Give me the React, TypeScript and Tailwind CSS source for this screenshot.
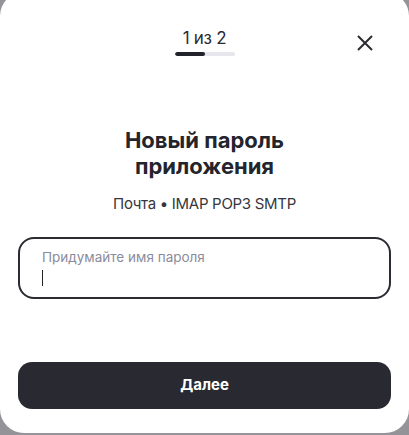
export default function App() {
  return (
    <div className="w-[409px] h-[435px] bg-[#939398] overflow-hidden" style={{ fontFamily: 'Inter, "Noto Sans", sans-serif' }}>
      <div className="-mt-[8px] h-[441px] bg-white rounded-[24px] flex flex-col px-[18px] pt-[36px]">
        {/* Header: step + close */}
        <div className="grid grid-cols-[1fr_auto_1fr] -mx-[18px]">
          <div />
          <div className="flex flex-col items-center">
            <span className="text-[17px] leading-[20px] text-[#2b2b33] tracking-[-0.3px]">1 из 2</span>
            <div className="mt-[4px] w-[60px] h-[4px] rounded-full bg-[#e6e6ec] overflow-hidden">
              <div className="w-[30px] h-full rounded-full bg-[#22222b]" />
            </div>
          </div>
          <div className="flex justify-end pr-[36px] pt-[7px]">
            <button className="w-[16px] h-[16px] text-[#2b2b33]">
              <svg width="16" height="16" viewBox="0 0 16 16" fill="none">
                <path d="M1 1L15 15M15 1L1 15" stroke="currentColor" strokeWidth="2" />
              </svg>
            </button>
          </div>
        </div>

        {/* Title */}
        <h1 className="mt-[71px] text-center text-[22px] leading-[26px] font-bold text-[#24242c]">
          Новый пароль
          <br />
          приложения
        </h1>
        <p className="mt-[15px] text-center text-[15px] leading-[20px] text-[#36363d] tracking-[-0.3px]">
          Почта • IMAP POP3 SMTP
        </p>

        {/* Input */}
        <div className="mt-[23px] h-[62px] border-2 border-[#2b2b33] rounded-[16px] pl-[22px] pt-[10px]">
          <div className="text-[13.5px] leading-[16px] text-[#8b8c9b]">Придумайте имя пароля</div>
          <div className="mt-[5px] w-px h-[16px] bg-[#222]" />
        </div>

        {/* Button */}
        <button className="mt-[63px] h-[47px] rounded-[14px] bg-[#292931] text-white text-[15px] font-bold">
          Далее
        </button>
      </div>
    </div>
  );
}
